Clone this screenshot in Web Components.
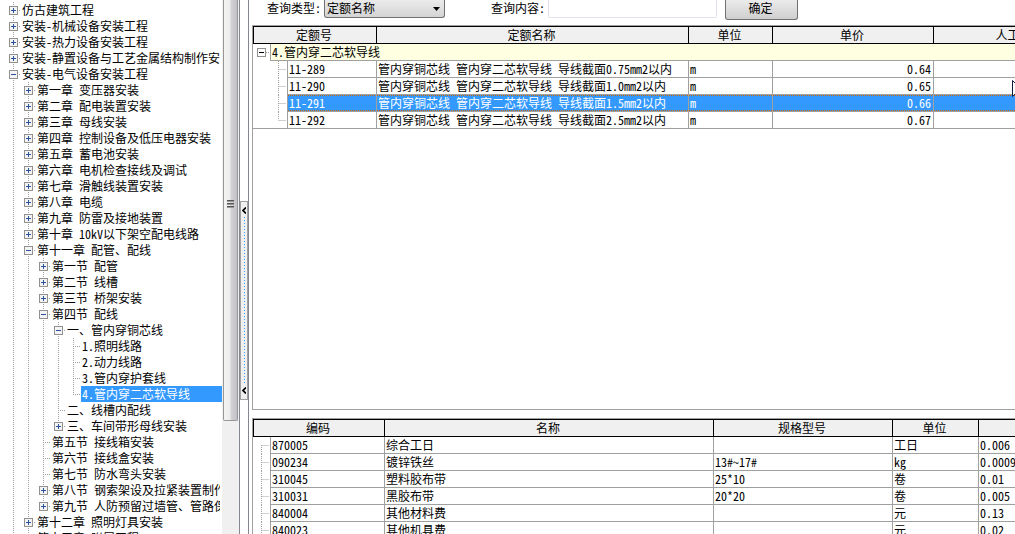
<!DOCTYPE html>
<html lang="zh-CN">
<head>
<meta charset="utf-8">
<title>定额查询</title>
<style>
html, body { height: 100%; margin: 0; }
body { overflow: hidden; background: #fff; color: #000; font: 12px/16px "Noto Sans CJK SC", sans-serif; font-feature-settings: "hwid"; }
</style>
</head>
<body>
<quota-app></quota-app>
<script>
class BaseElement extends HTMLElement {
  connectedCallback() {
    if (this.shadowRoot) return;
    this.attachShadow({ mode: 'open' }).innerHTML = `<style>*{box-sizing:border-box}${this.styles()}</style>${this.markup()}`;
  }
}

customElements.define('quota-app', class extends BaseElement {
  styles() { return `
    :host { display: flex; height: 100vh; overflow: hidden; white-space: nowrap; }
    .side { flex: none; width: 222px; overflow: hidden; }
    main { flex: 1; min-width: 0; display: flex; flex-direction: column; overflow: hidden; padding-left: 3px; }
    .results { flex: none; height: 385px; border: solid #a0a0a0; border-width: 1px 0 1px 1px; margin-bottom: 8px; overflow: hidden; }
    .parts { flex: 1; min-height: 0; overflow: hidden; border: solid #a0a0a0; border-width: 1px 0 0 1px; }
  `; }
  markup() { return `
    <nav class="side"><chapter-tree></chapter-tree></nav>
    <side-scroll></side-scroll>
    <split-bar></split-bar>
    <main>
      <query-bar></query-bar>
      <section class="results"><result-table></result-table></section>
      <section class="parts"><parts-table></parts-table></section>
    </main>
    <mouse-pointer></mouse-pointer>`; }
});

customElements.define('tree-toggle', class extends BaseElement {
  styles() { return `:host { display: block; width: 9px; height: 9px; } svg { display: block; }`; }
  markup() {
    const open = this.hasAttribute('open');
    const plain = this.hasAttribute('plain');
    const ink = plain ? '#000' : '#2c4f9e';
    return `<svg width="9" height="9" shape-rendering="crispEdges">
      <rect x=".5" y=".5" width="8" height="8" rx="${plain ? 0 : 1}" fill="${plain ? '#fff' : '#f4f4f4'}" stroke="#919191"/>
      <path d="M2 4.5h5${open ? '' : 'M4.5 2v5'}" stroke="${ink}" fill="none"/></svg>`;
  }
});

// Each entry: depth, state (+ closed, - open, . leaf), label.
const CHAPTERS = [
  [0,'+','仿古建筑工程'],[0,'+','安装-机械设备安装工程'],[0,'+','安装-热力设备安装工程'],
  [0,'+','安装-静置设备与工艺金属结构制作安'],[0,'-','安装-电气设备安装工程'],
  [1,'+','第一章 变压器安装'],[1,'+','第二章 配电装置安装'],[1,'+','第三章 母线安装'],
  [1,'+','第四章 控制设备及低压电器安装'],[1,'+','第五章 蓄电池安装'],[1,'+','第六章 电机检查接线及调试'],
  [1,'+','第七章 滑触线装置安装'],[1,'+','第八章 电缆'],[1,'+','第九章 防雷及接地装置'],
  [1,'+','第十章 10kV以下架空配电线路'],[1,'-','第十一章 配管、配线'],
  [2,'+','第一节 配管'],[2,'+','第二节 线槽'],[2,'+','第三节 桥架安装'],[2,'-','第四节 配线'],
  [3,'-','一、管内穿铜芯线'],[4,'.','1.照明线路'],[4,'.','2.动力线路'],[4,'.','3.管内穿护套线'],
  [4,'.','4.管内穿二芯软导线'],[3,'.','二、线槽内配线'],[3,'+','三、车间带形母线安装'],
  [2,'.','第五节 接线箱安装'],[2,'.','第六节 接线盒安装'],[2,'.','第七节 防水弯头安装'],
  [2,'+','第八节 钢索架设及拉紧装置制作'],[2,'+','第九节 人防预留过墙管、管路保'],
  [1,'+','第十二章 照明灯具安装'],[1,'+','第十三章 附属工程']
];

customElements.define('chapter-tree', class extends BaseElement {
  styles() { return `
    :host { display: block; padding: 2px 0 0 6px; }
    ul { list-style: none; margin: 0; padding: 0; }
    li { display: flex; height: 16px; }
    i { flex: none; width: 15px; height: 16px; display: grid; place-items: center; }
    i.v { background: repeating-linear-gradient(#a0a0a0 0 1px, transparent 1px 2px) 7px 0 / 1px 16px no-repeat; }
    i.end { background-size: 1px 8px; }
    i.h { background-image: repeating-linear-gradient(#a0a0a0 0 1px, transparent 1px 2px), repeating-linear-gradient(90deg, #a0a0a0 0 1px, transparent 1px 2px);
      background-position: 7px 0, 7px 8px; background-size: 1px 16px, 8px 1px; background-repeat: no-repeat; }
    i.h.end { background-size: 1px 8px, 8px 1px; }
    span { flex: 1; min-width: 0; overflow: hidden; padding-left: 1px; border-right: 2px solid transparent; }
    .on span { background: #3399ff; border-right-color: #3399ff; color: #fff; }
  `; }
  markup() {
    // A guide line continues at depth d while a later row of depth d follows before a shallower one.
    const continues = (i, d) => {
      for (let k = i + 1; k < CHAPTERS.length; k++) {
        if (CHAPTERS[k][0] < d) return false;
        if (CHAPTERS[k][0] === d) return true;
      }
      return d < 2;
    };
    return '<ul>' + CHAPTERS.map(([depth, state, label], i) => {
      let cells = '';
      for (let d = 0; d < depth; d++) cells += `<i class="${continues(i, d) ? 'v' : ''}"></i>`;
      cells += `<i class="v h ${continues(i, depth) ? '' : 'end'}">${state === '.' ? '' : `<tree-toggle ${state === '-' ? 'open' : ''}></tree-toggle>`}</i>`;
      return `<li class="${label.startsWith('4.') ? 'on' : ''}">${cells}<span>${label}</span></li>`;
    }).join('') + '</ul>';
  }
});

customElements.define('side-scroll', class extends BaseElement {
  styles() { return `
    :host { flex: none; display: block; width: 17px; background: #f0f0f0; padding: 0 1px; overflow: hidden; }
    div { height: 421px; border: 1px solid #979797; border-top: 0; border-radius: 0 0 2px 2px; background: linear-gradient(90deg, #f4f4f4, #ececec 45%, #d2d2d6 55%, #c0c0c6); padding: 200px 0 0 3px; }
    svg { display: block; }
  `; }
  markup() { return `<div><svg width="7" height="9" shape-rendering="crispEdges"><path d="M0 .5h7M0 3.5h7M0 6.5h7" stroke="#555"/><path d="M0 1.5h7M0 4.5h7M0 7.5h7" stroke="#999"/></svg></div>`; }
});

customElements.define('split-bar', class extends BaseElement {
  styles() { return `
    :host { flex: none; display: block; width: 10px; border: solid #828790; border-width: 0 1px; padding-top: 201px; }
    div { width: 8px; height: 199px; border: 1px solid #a0a0a0; background: #f0f0f0; display: flex; flex-direction: column; justify-content: space-between; align-items: center; padding: 5px 0; }
    b { flex: 1; width: 1px; margin: 3px 0; background: repeating-linear-gradient(#3399ff 0 1px, transparent 1px 3px); }
    svg { display: block; }
  `; }
  markup() {
    const arrow = '<svg width="4" height="7"><path d="M4 .5L1 3.5 4 6.5" fill="none" stroke="#000" stroke-width="1.7"/></svg>';
    return `<div>${arrow}<b></b>${arrow}</div>`;
  }
});

customElements.define('query-bar', class extends BaseElement {
  styles() { return `
    :host { flex: none; display: flex; align-items: flex-start; height: 25px; padding-left: 15px; }
    label { height: 16px; }
    select, input, button { font: inherit; font-feature-settings: inherit; color: inherit; margin: 0; }
    .pick { width: 121px; height: 18px; margin: 0 46px 0 3px; }
    select { appearance: none; display: block; width: 100%; height: 18px; padding: 0 0 1px 2px; border: 1px solid #707070; border-top: 0; border-radius: 0 0 3px 3px;
      background: url("data:image/svg+xml,%3Csvg xmlns='http://www.w3.org/2000/svg' width='7' height='4'%3E%3Cpath d='M0 0h7L3.5 4z'/%3E%3C/svg%3E") right 4px top 7px no-repeat, linear-gradient(#ebebeb, #d4d4d4); }
    input { width: 169px; height: 18px; margin-left: 3px; border: 1px solid #e3e3ee; border-top: 0; border-radius: 0 0 2px 2px; background: #fff; }
    button { width: 73px; height: 20px; margin-left: 8px; padding: 0 2px 3px 0; border: 1px solid #707070; border-top: 0; border-radius: 0 0 3px 3px; background: linear-gradient(#ebebeb, #cfcfcf); line-height: 16px; }
  `; }
  markup() { return `
    <label for="type">查询类型:</label>
    <div class="pick"><select id="type"><option>定额名称</option></select></div>
    <label for="text">查询内容:</label>
    <input id="text" type="text">
    <button type="button">确定</button>`; }
});

const TABLE_CSS = `
  :host { display: block; }
  table { border-collapse: separate; border-spacing: 0; table-layout: fixed; width: 100%; min-width: 866px; }
  th { height: 18px; padding: 0 2px 0 0; font-weight: 400; background: #f0f0f0; border: solid #000; border-width: 1px 1px 1px 0; }
  th:first-child { border-left-width: 1px; }
  td { height: 17px; padding: 0 2px 0 1px; border: solid #a0a0a0; border-width: 0 1px 1px 0; overflow: hidden; line-height: 16px; }
  td.tree { border: 0; padding: 0; }
  td.tree svg { display: block; }
  th:last-child, td:last-child { border-right: 0; }
`;

customElements.define('result-table', class extends BaseElement {
  styles() { return TABLE_CSS + `
    td.group { background: #ffffe1; border-left: 1px solid #a0a0a0; }
    td.code { border-left: 1px solid #a0a0a0; }
    td.price { text-align: right; }
    tr.on td:not(.tree) { color: #fff; background: linear-gradient(90deg, #cc6600 50%, transparent 50%) 0 0 / 2px 1px repeat-x, linear-gradient(90deg, #cc6600 50%, transparent 50%) 0 100% / 2px 1px repeat-x, #3399ff; background-clip: padding-box; }
    tr.last td.tree { border-bottom: 1px solid #a0a0a0; }
    td.toggle { vertical-align: middle; padding-left: 4px; }
    .toggle div { display: flex; align-items: center; }
    .toggle i { width: 5px; height: 1px; background: repeating-linear-gradient(90deg, #a0a0a0 0 1px, transparent 1px 2px); }
  `; }
  markup() {
    const rows = [['11-289','0.75','0.64'],['11-290','1.0','0.65'],['11-291','1.5','0.66'],['11-292','2.5','0.67']];
    return `<table>
      <colgroup><col style="width:17px"><col style="width:17px"><col style="width:90px"><col style="width:312px"><col style="width:84px"><col style="width:161px"><col></colgroup>
      <thead><tr><th colspan="3">定额号</th><th>定额名称</th><th>单位</th><th>单价</th><th>人工费单价</th></tr></thead>
      <tbody><tr><td class="tree toggle"><div><tree-toggle open plain></tree-toggle><i></i></div></td><td class="group" colspan="6">4.管内穿二芯软导线</td></tr>
      ${rows.map(([code, size, price], i) => `<tr class="${i === 2 ? 'on' : i === 3 ? 'last' : ''}">
        <td class="tree"></td><td class="tree"><svg width="17" height="${i === 3 ? 16 : 17}"><path d="M8.5 0v${i === 3 ? 8 : 17}M8.5 8.5h8" stroke="#a0a0a0" stroke-dasharray="1 1"/></svg></td>
        <td class="code">${code}</td><td>管内穿铜芯线 管内穿二芯软导线 导线截面${size}mm2以内</td><td>m</td><td class="price">${price}</td><td></td></tr>`).join('')}
      </tbody></table>`;
  }
});

customElements.define('parts-table', class extends BaseElement {
  styles() { return TABLE_CSS + `td.code { border-left: 1px solid #a0a0a0; }`; }
  markup() {
    const rows = [['870005','综合工日','','工日','0.006'],['090234','镀锌铁丝','13#~17#','kg','0.0009'],['310045','塑料胶布带','25*10','卷','0.01'],
      ['310031','黑胶布带','20*20','卷','0.005'],['840004','其他材料费','','元','0.13'],['840023','其他机具费','','元','0.02']];
    return `<table>
      <colgroup><col style="width:17px"><col style="width:115px"><col style="width:329px"><col style="width:179px"><col style="width:86px"><col></colgroup>
      <thead><tr><th colspan="2">编码</th><th>名称</th><th>规格型号</th><th>单位</th><th></th></tr></thead>
      <tbody>${rows.map(([code, ...rest], i) => `<tr><td class="tree"><svg width="17" height="17"><path d="M8.5 ${i ? 0 : 8}V17M8.5 8.5h8" stroke="#a0a0a0" stroke-dasharray="1 1"/></svg></td>
        <td class="code">${code}</td>${rest.map(t => `<td>${t}</td>`).join('')}</tr>`).join('')}</tbody></table>`;
  }
});

customElements.define('mouse-pointer', class extends BaseElement {
  styles() { return `:host { position: absolute; right: 0; top: 80px; width: 3px; height: 18px; overflow: hidden; } svg { display: block; }`; }
  markup() { return `<svg width="12" height="18"><path d="M.5 .5v16l4-4 3 5 2-1-3-5h5z" fill="#fff" stroke="#101840"/></svg>`; }
});
</script>
</body>
</html>
